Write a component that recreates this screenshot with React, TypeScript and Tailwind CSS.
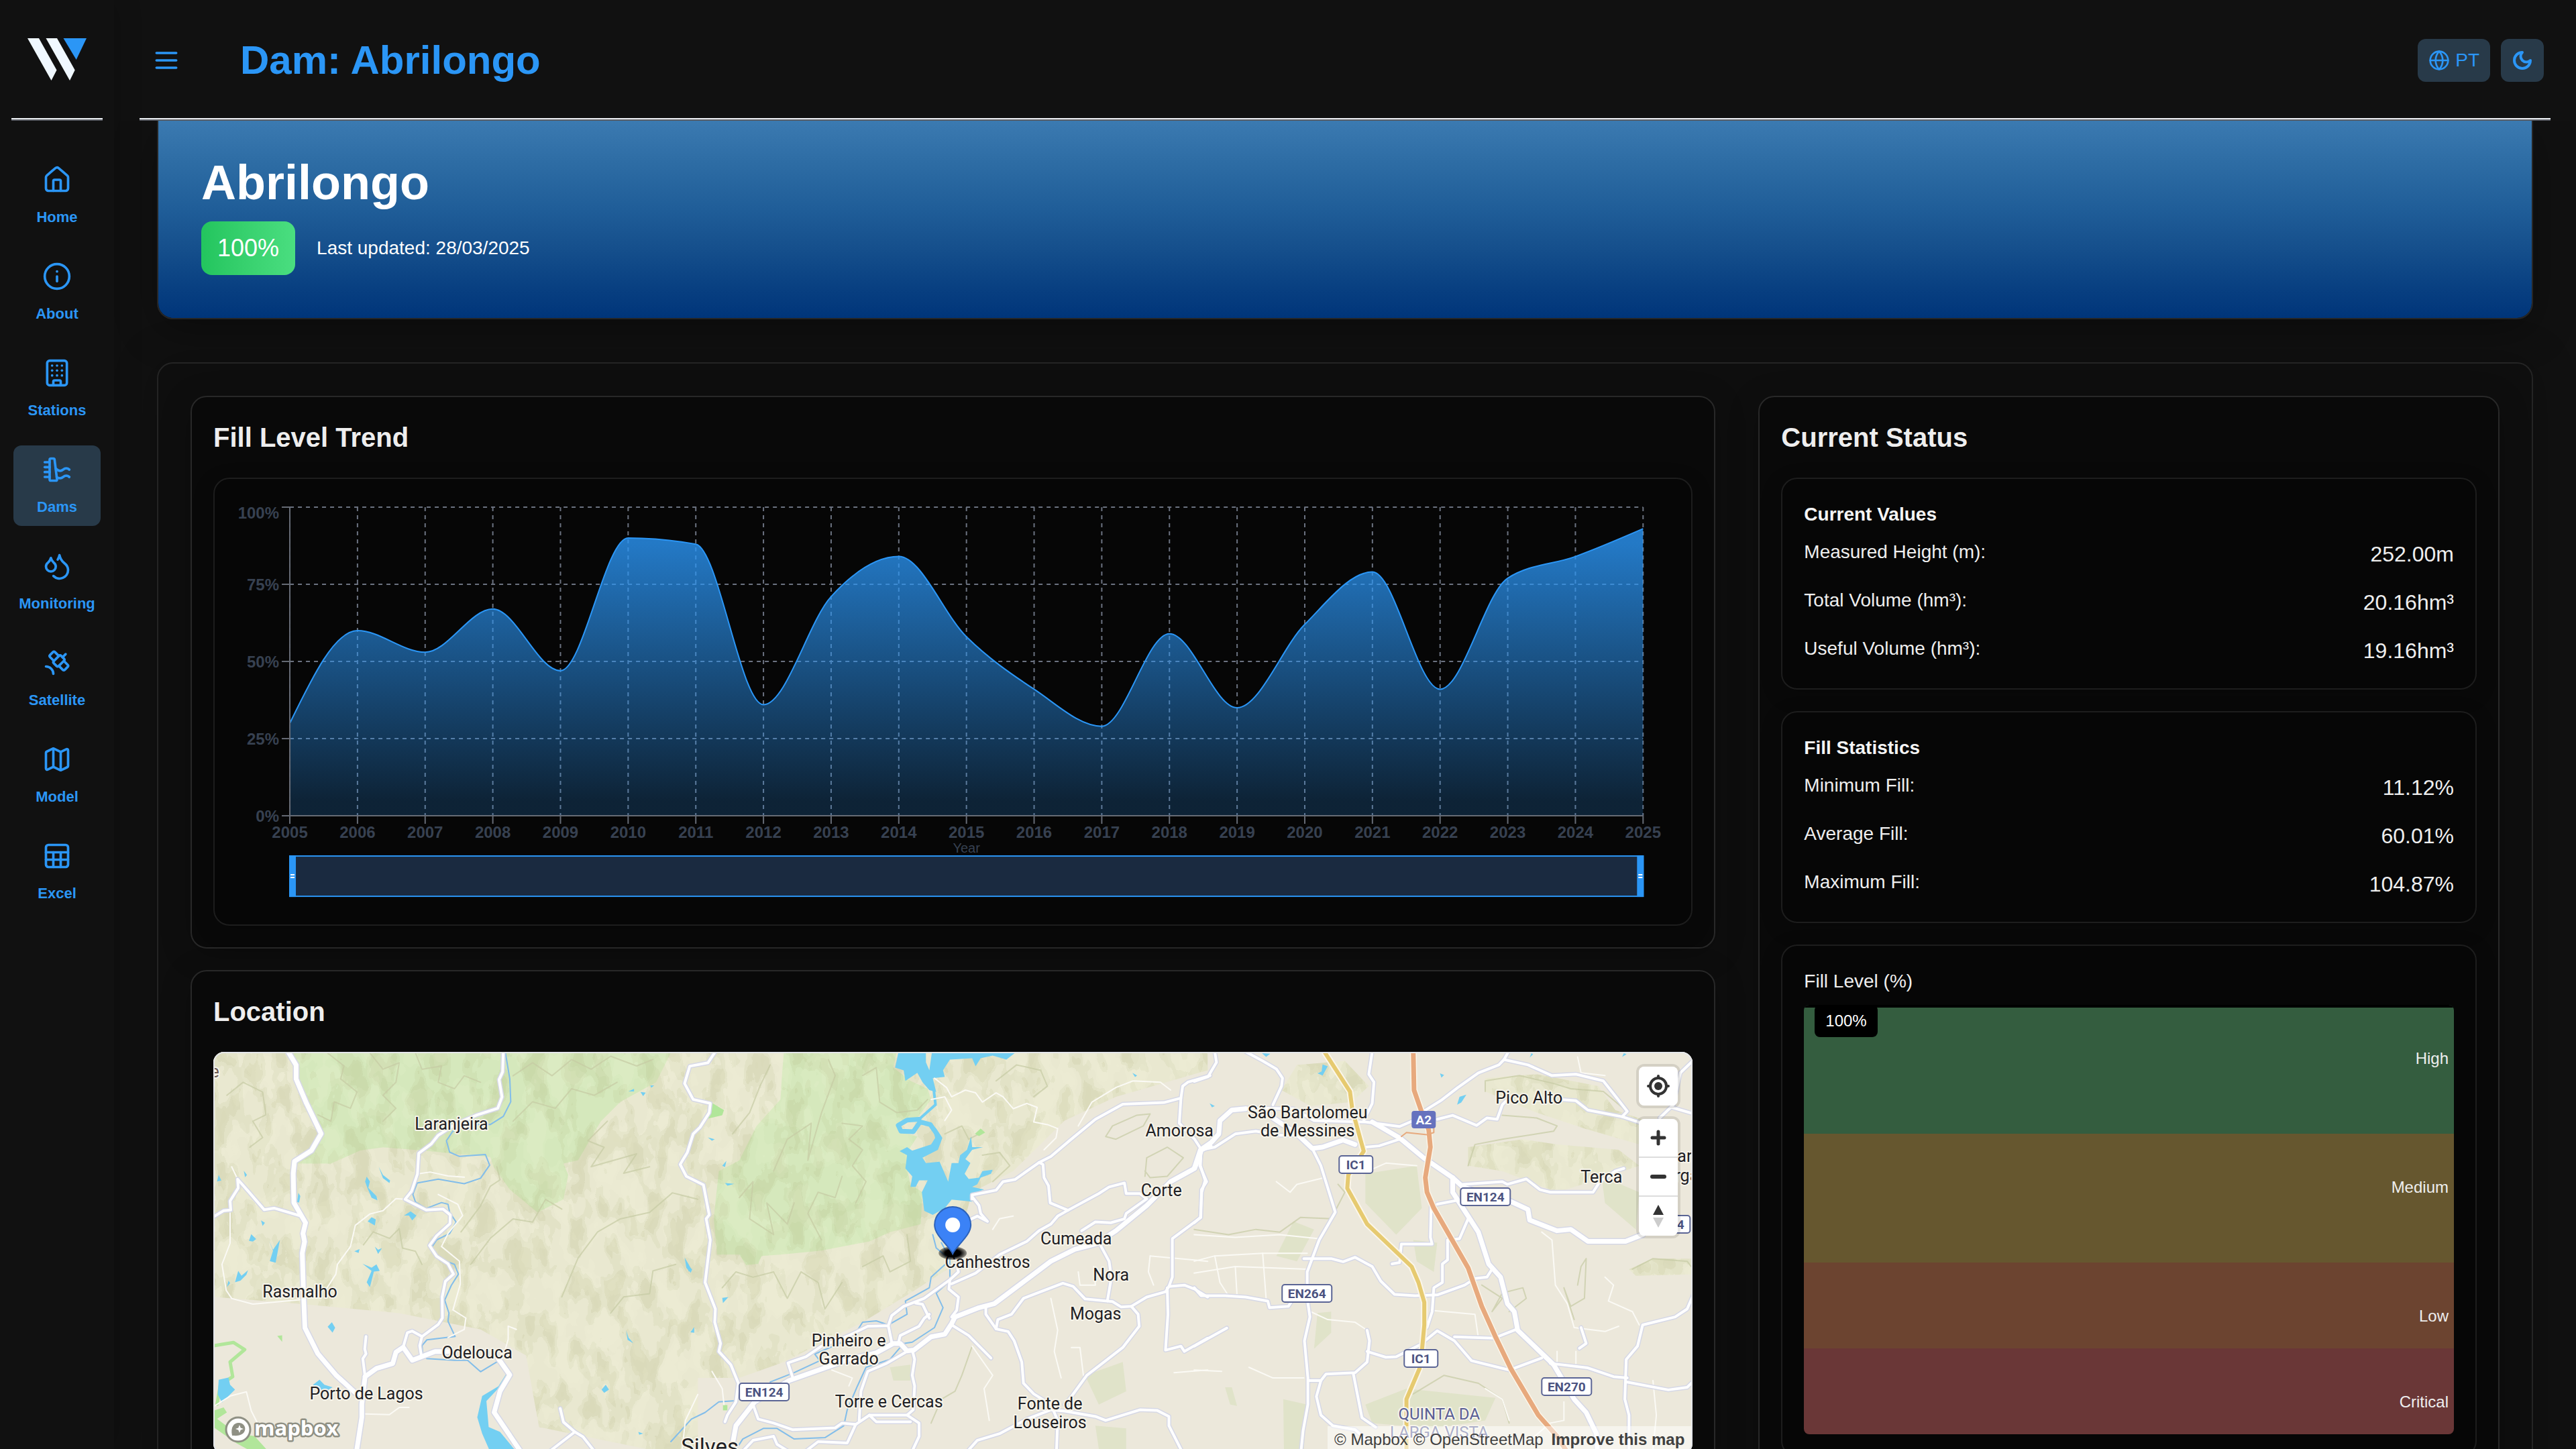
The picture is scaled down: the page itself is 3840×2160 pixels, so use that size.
import type { ReactNode } from "react";
import {
  Building,
  Dam,
  Droplets,
  Globe,
  House,
  Info,
  Map as MapIcon,
  Satellite,
  Sheet,
  type LucideIcon,
} from "lucide-react";

const NAV: { label: string; icon: LucideIcon; active?: boolean }[] = [
  { label: "Home", icon: House },
  { label: "About", icon: Info },
  { label: "Stations", icon: Building },
  { label: "Dams", icon: Dam, active: true },
  { label: "Monitoring", icon: Droplets },
  { label: "Satellite", icon: Satellite },
  { label: "Model", icon: MapIcon },
  { label: "Excel", icon: Sheet },
];

function Rule() {
  return <hr className="h-0 border-t-2 border-b-2 border-t-[#eef1f5] border-b-[#5a5d64]" />;
}

function Logo() {
  return (
    <svg viewBox="0 0 88 63" className="h-[63px] w-[88px]" role="img" aria-label="W">
      <path fill="#f0f8ff" d="M0 0H17L43.5 47.5 35.5 63Z" />
      <path fill="#f0f8ff" d="M27.5 0H44L70.7 47.5 63 63Z" />
      <path fill="#2b96f6" d="M53.5 0H88L72.7 32Z" />
    </svg>
  );
}

function Sidebar() {
  return (
    <aside className="z-10 flex w-[170px] shrink-0 flex-col bg-[#111111] shadow-[0_0_40px_rgba(0,0,0,0.2)]">
      <a href="#home" className="flex h-[176px] items-center justify-center">
        <Logo />
      </a>
      <div className="px-[17px]">
        <Rule />
      </div>
      <nav className="mt-[52px] flex flex-col gap-6 px-5">
        {NAV.map(({ label, icon: Icon, active }) => (
          <a
            key={label}
            href={"#" + label.toLowerCase()}
            className={
              "flex flex-col items-center gap-[18px] rounded-xl pt-3.5 pb-3 text-[22px] leading-8 font-bold text-[#2b96f6] " +
              (active ? "bg-[#283a49]" : "")
            }
          >
            <Icon size={44} strokeWidth={2} />
            {label}
          </a>
        ))}
      </nav>
    </aside>
  );
}

function Header() {
  return (
    <header>
      <div className="flex h-[176px] items-center pt-1 pr-2.5 pl-[18px]">
        <button type="button" aria-label="Toggle menu" className="text-[#2b96f6]">
          <svg viewBox="0 0 24 24" className="size-11" fill="none" stroke="currentColor" strokeWidth={2} strokeLinecap="round">
            <path d="M4 6h16M4 12h16M4 18h16" />
          </svg>
        </button>
        <h1 className="ml-22 flex-1 text-[60px] leading-[72px] font-bold text-[#2b96f6]">Dam: Abrilongo</h1>
        <div className="flex gap-4 text-[#2b96f6]">
          <button type="button" className="flex h-16 items-center gap-2 rounded-xl bg-[#283a49] px-4 text-[28px] leading-8">
            <Globe size={32} strokeWidth={2} />
            PT
          </button>
          <button type="button" aria-label="Toggle theme" className="flex size-16 items-center justify-center rounded-xl bg-[#283a49]">
            <svg viewBox="0 0 24 24" className="size-8" fill="none" stroke="currentColor" strokeWidth={3} strokeLinejoin="round">
              <path d="M12 3a6 6 0 0 0 9 9 9 9 0 1 1-9-9Z" />
            </svg>
          </button>
        </div>
      </div>
      <Rule />
    </header>
  );
}

function Hero() {
  return (
    <section className="rounded-b-3xl border-2 border-t-0 border-[#262626] bg-[linear-gradient(to_bottom,#3b7ab1_0%,#2d6ca4_22%,#205e99_44%,#154f8c_65%,#073e80_87%,#00357a_100%)] bg-clip-padding px-16 pt-12 pb-16 text-white shadow-[0_16px_64px_rgba(0,0,0,0.3)]">
      <h2 className="text-[72px] leading-[88px] font-bold">Abrilongo</h2>
      <div className="mt-3.5 flex items-center gap-8">
        <span className="rounded-2xl bg-linear-to-r from-[#22c55e] to-[#4ade80] px-6 py-4 text-4xl leading-[48px]">100%</span>
        <span className="text-[28px] leading-10">Last updated: 28/03/2025</span>
      </div>
    </section>
  );
}

/* ---------- Fill level chart ---------- */

const LEVELS = [30, 60, 53, 67, 47, 90, 88, 36, 71, 84, 58, 41, 29, 59, 35, 62, 79, 41, 77, 84, 93];
const FIRST_YEAR = 2005;
const PLOT = { left: 80, right: 2097, top: 10, bottom: 470 };
const px = (i: number) => PLOT.left + (i * (PLOT.right - PLOT.left)) / (LEVELS.length - 1);
const py = (v: number) => PLOT.bottom - (v * (PLOT.bottom - PLOT.top)) / 100;

/* Monotone cubic interpolation (Fritsch–Carlson tangents). */
function monotonePath(xs: number[], ys: number[]) {
  const n = xs.length;
  const slope = (i: number) => (ys[i + 1] - ys[i]) / (xs[i + 1] - xs[i]);
  const tangent: number[] = [];
  for (let i = 1; i < n - 1; i++) {
    const h0 = xs[i] - xs[i - 1];
    const h1 = xs[i + 1] - xs[i];
    const s0 = slope(i - 1);
    const s1 = slope(i);
    const p = (s0 * h1 + s1 * h0) / (h0 + h1);
    tangent[i] = (Math.sign(s0) + Math.sign(s1)) * Math.min(Math.abs(s0), Math.abs(s1), 0.5 * Math.abs(p));
  }
  tangent[0] = (3 * slope(0) - tangent[1]) / 2;
  tangent[n - 1] = (3 * slope(n - 2) - tangent[n - 2]) / 2;
  let d = `M${xs[0]},${ys[0]}`;
  for (let i = 0; i < n - 1; i++) {
    const h = (xs[i + 1] - xs[i]) / 3;
    d += `C${xs[i] + h},${ys[i] + h * tangent[i]} ${xs[i + 1] - h},${ys[i + 1] - h * tangent[i + 1]} ${xs[i + 1]},${ys[i + 1]}`;
  }
  return d;
}

function FillChart() {
  const line = monotonePath(
    LEVELS.map((_, i) => px(i)),
    LEVELS.map(py),
  );
  const width = PLOT.right - PLOT.left;
  return (
    <svg viewBox="0 0 2137 600" className="block w-full" role="img" aria-label="Fill level by year">
      <defs>
        <linearGradient id="fill" x1="0" y1="0" x2="0" y2="1">
          <stop offset="5%" stopColor="#2b96f6" stopOpacity={0.8} />
          <stop offset="95%" stopColor="#2b96f6" stopOpacity={0.2} />
        </linearGradient>
      </defs>
      <g stroke="#6b7280" strokeWidth={2} strokeDasharray="6 6">
        {[0, 25, 50, 75, 100].map((v) => (
          <path key={v} d={`M${PLOT.left} ${py(v)}H${PLOT.right}`} />
        ))}
        {LEVELS.map((_, i) => (
          <path key={i} d={`M${px(i)} ${PLOT.top}V${PLOT.bottom}`} />
        ))}
      </g>
      <path d={`${line}V${PLOT.bottom}H${PLOT.left}Z`} fill="url(#fill)" />
      <path d={line} fill="none" stroke="#2b96f6" strokeWidth={2} />
      <g stroke="#666b75" strokeWidth={2}>
        <path d={`M${PLOT.left} ${PLOT.top}V${PLOT.bottom}H${PLOT.right}`} fill="none" />
        {LEVELS.map((_, i) => (
          <path key={i} d={`M${px(i)} ${PLOT.bottom}v12`} />
        ))}
        {[0, 25, 50, 75, 100].map((v) => (
          <path key={v} d={`M${PLOT.left} ${py(v)}h-12`} />
        ))}
      </g>
      <g fill="#374151" fontSize={24} fontWeight={700}>
        {[0, 25, 50, 75, 100].map((v) => (
          <text key={v} x={64} y={v === 100 ? 27 : py(v) + 9} textAnchor="end">
            {v}%
          </text>
        ))}
        {LEVELS.map((_, i) => (
          <text key={i} x={px(i)} y={503} textAnchor="middle">
            {FIRST_YEAR + i}
          </text>
        ))}
      </g>
      <text x={px(10)} y={525} fill="#374151" fontSize={20} textAnchor="middle">
        Year
      </text>
      <rect x={PLOT.left} y={530} width={width} height={60} fill="#1a2a40" stroke="#2b96f6" strokeWidth={2} />
      {[PLOT.left - 1, PLOT.right - 9].map((x) => (
        <g key={x}>
          <rect x={x} y={529} width={10} height={62} fill="#2b96f6" />
          <path d={`M${x + 2} 558h6M${x + 2} 562h6`} stroke="#fff" strokeWidth={2} />
        </g>
      ))}
    </svg>
  );
}

/* ---------- Location map ---------- */

/* The map is digitised in three sheets; each has its own scale and origin. */
type SheetSpec = { sx: number; sy: number; ox: number; oy: number };
const WEST: SheetSpec = { sx: 2.063, sy: 2.063, ox: -38, oy: -168 };
const CENTRE: SheetSpec = { sx: 1.96, sy: 2.529, ox: 682, oy: -28 };
const EAST: SheetSpec = { sx: 1.96, sy: 2.529, ox: 1462, oy: -28 };

function project(s: SheetSpec, points: string) {
  return points
    .split(" ")
    .map((p) => {
      const [x, y] = p.split(",").map(Number);
      return `${(x / s.sx + s.ox).toFixed(1)},${(y / s.sy + s.oy).toFixed(1)}`;
    })
    .join(" ");
}

const MAJOR: [SheetSpec, string][] = [
  [WEST, "305,340 333,387 333,430 365,505 410,598 380,650 328,683 324,720 326,810 352,855 362,872 354,905 359,930 352,965 356,1100 360,1195 400,1275 455,1340 515,1395 540,1400"],
  [WEST, "545,1345 535,1430 535,1470 515,1600"],
  [WEST, "545,1345 580,1320 630,1305 640,1270 662,1255 690,1295 760,1268 800,1268"],
  [WEST, "955,1290 990,1340 960,1390 942,1455 1040,1600"],
  [CENTRE, "170,1620 190,1480 245,1390 345,1310 520,1230 600,1205 650,1170 670,1170 690,1198 710,1195 760,1145 800,1135 820,1095 830,1070 900,1035 945,1020 1110,860 1180,815 1240,795 1300,745 1390,650 1460,560 1530,510 1550,440 1575,425"],
  [EAST, "755,545 755,600 800,690 830,750 860,870 895,920 915,1020 935,1050 945,1120 1050,1250 1110,1380 1145,1430 1175,1510 1180,1620"],
  [EAST, "520,335 600,395 670,470 755,545 785,580 850,610"],
  [EAST, "925,635 975,665 980,705 1060,745 1100,740 1150,785 1260,785 1310,760"],
  [EAST, "0,510 18,440 50,412 72,380 75,330 110,290 150,285"],
  [EAST, "230,320 300,380 345,435 375,430 435,403 470,420"],
];

const ROADS: [SheetSpec, string][] = [
  [WEST, "75,856 110,835 132,833 130,805 155,765 153,738 190,780 235,832 265,827 350,852"],
  [WEST, "970,340 968,408 957,432 966,485 953,520 890,540 830,565 770,603 748,630 710,658 706,722 688,775 668,800 733,833 785,830 807,848 806,875 765,912 743,942 765,975 800,998 817,1030 792,1052 782,1100 783,1165 770,1185 720,1222 690,1205 675,1210 662,1255"],
  [WEST, "720,1222 713,1250 718,1280"],
  [WEST, "548,1222 544,1260 548,1275 538,1290 545,1345"],
  [WEST, "1080,1600 1190,1515 1155,1485 1145,1443"],
  [WEST, "1190,1515 1215,1530 1270,1600"],
  [CENTRE, "130,70 108,112 55,125 40,190 65,250 115,265 112,300 85,355 65,380 48,450 27,495 45,540 95,572 112,685 103,700 115,780 100,940 130,1040 128,1090 145,1170 140,1200 175,1250 197,1320 190,1390 165,1440 158,1465"],
  [CENTRE, "355,1295 342,1243 395,1220 440,1180 520,1140 575,1105 635,1103 645,1065 680,1030 740,1000 815,930 840,900 835,870"],
  [CENTRE, "635,1103 645,1165"],
  [CENTRE, "715,1018 735,1022 755,1075"],
  [CENTRE, "815,930 812,965 840,995 835,1045 820,1070"],
  [CENTRE, "820,945 890,905 960,835 1040,785 1075,745 1110,720 1130,690 1160,668 1250,605 1280,580 1325,565 1330,605 1370,605 1390,625 1330,680 1325,700 1285,715 1240,712 1200,745"],
  [CENTRE, "1160,668 1108,640 1103,575 1090,545 1087,495 1075,488"],
  [CENTRE, "880,625 880,610 950,592 970,560 1005,552 1075,488 1110,465 1165,405 1240,325 1320,268 1440,262 1490,245 1495,200 1510,185 1575,160"],
  [CENTRE, "1490,245 1485,340 1530,400 1550,440"],
  [CENTRE, "882,620 900,650 905,680 925,710 895,690 870,705"],
  [CENTRE, "705,1195 712,1230 705,1290 712,1330 708,1420 690,1440"],
  [CENTRE, "690,1200 630,1245 575,1275 555,1350 550,1460"],
  [CENTRE, "665,1165 670,1140 725,1105 740,1075 755,1060"],
  [CENTRE, "920,1035 920,1060 950,1115 985,1125 1003,1160 1025,1240 1030,1320 1060,1360 1110,1400 1130,1460 1125,1620"],
  [CENTRE, "950,1115 955,1080 995,1060 1030,1000 1145,943 1175,955 1210,1002 1290,1012 1315,1032 1345,1030 1390,995 1445,975 1455,955 1500,950 1530,965 1568,995"],
  [CENTRE, "1255,800 1280,860 1287,920 1275,1010"],
  [CENTRE, "1345,1030 1365,1060 1368,1105 1320,1185 1215,1290 1170,1370 1150,1400"],
  [CENTRE, "820,1100 870,1140 935,1225"],
  [CENTRE, "1455,955 1465,920 1465,775 1548,695 1550,590 1565,560 1545,500 1550,440"],
  [CENTRE, "1450,960 1452,1060 1445,1195 1490,1180 1500,1200 1568,1150"],
  [CENTRE, "850,1600 895,1535 960,1510 1040,1455 1110,1420 1150,1425 1240,1445 1270,1460 1370,1420 1420,1422 1455,1445 1455,1480 1510,1620"],
  [CENTRE, "240,1400 255,1455 300,1470 355,1495 480,1488 500,1470 540,1475 580,1440 690,1440 725,1470 725,1520 700,1590"],
  [CENTRE, "540,1475 515,1545 430,1540 380,1590"],
  [CENTRE, "200,1590 240,1535 300,1520 310,1550 360,1590"],
  [CENTRE, "580,1440 600,1465 700,1465"],
  [EAST, "150,70 200,105 240,135 258,170 255,200 230,270"],
  [EAST, "60,70 65,110 40,165 0,182"],
  [EAST, "520,70 510,155 525,185 520,265 495,330"],
  [EAST, "150,282 290,285 350,330 500,335 600,352 640,330"],
  [EAST, "20,440 60,430 120,380 180,370 250,385 310,385"],
  [EAST, "500,430 540,425 600,400"],
  [EAST, "345,435 370,500 412,675 365,780 330,900 330,1000 338,1070 322,1160 332,1300 332,1400 318,1500 310,1600"],
  [EAST, "785,570 900,560 915,570 970,550 1010,590 1040,600 1165,600 1185,560 1230,520 1255,510"],
  [EAST, "905,100 890,120 830,150 770,205 720,255 670,295"],
  [EAST, "918,70 905,100 975,120 1045,160 1115,155 1195,180 1235,245 1265,295 1250,315"],
  [EAST, "1070,250 1115,255 1150,290 1250,315 1320,345"],
  [EAST, "710,325 755,310 825,348 855,320 885,325 900,270 915,250"],
  [EAST, "320,850 400,850 435,862 470,845 520,880 545,935 585,985 645,990 710,987 790,950 820,925 855,920 870,890"],
  [EAST, "692,650 690,770 695,795 605,795 600,865 578,870"],
  [EAST, "770,630 710,645"],
  [EAST, "800,700 775,775 740,780 740,855 725,870 725,940 700,960 695,1050 680,1110"],
  [EAST, "0,960 20,990 90,990 150,995 215,1010 220,1035 275,1030 290,1000"],
  [EAST, "0,1180 95,1112"],
  [EAST, "335,1310 370,1310 385,1285 470,1280 505,1240 512,1160 505,1120"],
  [EAST, "505,1200 560,1222 590,1220 660,1175 710,1122 760,1160 810,1235 920,1270 1015,1225"],
  [EAST, "760,1145 875,1150 945,1115"],
  [EAST, "465,1285 490,1450 530,1485"],
  [EAST, "370,1310 357,1370 370,1440 405,1480 470,1495 500,1530"],
  [EAST, "1040,1245 1150,1262 1225,1295 1265,1300"],
  [EAST, "1460,980 1440,1040 1405,1070 1310,1100 1295,1180 1262,1230 1258,1380 1270,1440 1270,1600"],
  [EAST, "1262,1315 1385,1345 1440,1335 1460,1310"],
  [EAST, "1130,1110 1145,1170 1125,1188"],
  [EAST, "0,715 18,695 22,600 32,555 18,500 20,440"],
  [EAST, "1460,100 1420,150 1400,270 1360,320"],
  [EAST, "1395,280 1460,305"],
];

const LANES: [SheetSpec, string][] = [
  [WEST, "130,835 130,935 105,1000 118,1080 135,1105 200,1122 350,1108"],
  [WEST, "420,1085 455,1030 460,1000 500,945 515,880 560,845 600,835 640,798 668,800"],
  [WEST, "706,722 745,716 800,728 850,732"],
  [WEST, "770,785 830,815 845,850 800,905 780,945 835,990 838,1060 815,1140 855,1165 850,1200 800,1225"],
  [WEST, "83,1435 130,1405 180,1392 195,1450 215,1490"],
  [WEST, "135,700 153,738"],
  [WEST, "1010,1200 985,1190 985,1230 968,1290"],
  [WEST, "545,1460 620,1462 650,1440 680,1440"],
  [WEST, "1520,1568 1530,1480 1568,1400"],
  [CENTRE, "770,170 805,205 820,240 860,215 890,225 910,260 950,225 970,240 1000,285 1040,265 1070,280 1060,335 1100,345 1130,360 1125,395 1090,440"],
  [CENTRE, "1190,350 1230,260 1300,205 1350,180 1430,185 1460,215"],
  [CENTRE, "760,250 800,240 820,290 800,330"],
  [CENTRE, "1400,840 1568,860"],
  [CENTRE, "1400,840 1395,900 1410,950"],
  [CENTRE, "1110,1000 1130,1120 1120,1200 1140,1300"],
  [CENTRE, "1170,1185 1195,1185 1205,1290"],
  [CENTRE, "1470,1280 1568,1270"],
  [CENTRE, "880,1180 940,1290 915,1340 930,1460"],
  [CENTRE, "940,740 960,700 1000,690"],
  [CENTRE, "1190,900 1195,950 1240,950 1235,880"],
  [CENTRE, "470,1270 530,1300 520,1330"],
  [CENTRE, "120,1275 150,1340 155,1400"],
  [EAST, "0,860 60,840 200,830 330,830"],
  [EAST, "0,905 120,880 330,890"],
  [EAST, "60,840 75,940 100,990"],
  [EAST, "120,880 125,990"],
  [EAST, "200,830 210,1000"],
  [EAST, "0,760 120,770 250,760 365,775"],
  [EAST, "240,560 280,600 300,570 380,545"],
  [EAST, "340,1050 390,1080 470,1090 505,1120"],
  [EAST, "690,1045 820,1060 830,1150"],
  [EAST, "1015,750 1045,780 1055,950 1090,1020 1110,1110"],
  [EAST, "1200,920 1225,950 1210,1010 1280,1050 1300,1100"],
  [EAST, "1110,1110 1200,1125 1240,1105"],
  [EAST, "1060,1200 1060,1240"],
  [EAST, "1115,1200 1115,1255"],
  [EAST, "1340,1310 1350,1440 1340,1568"],
  [EAST, "985,1530 1040,1470 1080,1460 1080,1390"],
  [EAST, "0,1270 80,1275"],
  [EAST, "160,1260 230,1300 320,1300"],
  [EAST, "450,500 490,530 560,490 650,500"],
  [EAST, "1120,90 1130,150 1200,160"],
  [EAST, "850,1340 900,1380 920,1460"],
];

const STREAMS: [SheetSpec, string][] = [
  [WEST, "975,340 990,430 993,500 970,545 930,570 870,570 815,590 795,620 805,655 835,668 915,662 928,695 900,735 850,752 770,738 705,750 692,785 700,808 733,828 780,810 800,815 805,840 825,870 805,905 765,925 748,950 780,985 820,1000 832,1030 810,1065 790,1110 803,1150 800,1175 822,1222 735,1232 720,1250 722,1270 735,1290 820,1295 860,1295 900,1330 955,1297"],
  [CENTRE, "765,760 775,810 803,840 803,870 760,920 755,960 720,985 685,1010 690,1060 635,1100 600,1085 560,1090 545,1120 510,1160 420,1210 435,1235 360,1280 290,1315"],
  [CENTRE, "790,790 815,850 815,935 775,980 795,1035 770,1110 705,1165 680,1170 640,1230 570,1260 545,1330 515,1420 505,1480 450,1525 360,1530 310,1490 270,1490 210,1530 195,1560"],
  [CENTRE, "195,1385 140,1390 100,1430 60,1455 0,1540"],
];

const PONDS: [SheetSpec, string][] = [
  [WEST, "550,730 560,745 555,765 580,790 583,803 565,795 552,765 545,745"],
  [WEST, "587,700 600,725 622,742 620,750 600,735"],
  [WEST, "565,855 578,862 575,880 553,868"],
  [WEST, "665,850 685,837 703,850 690,865 680,850"],
  [WEST, "225,865 237,872 230,882"],
  [WEST, "195,907 210,922 200,930 188,928"],
  [WEST, "250,928 262,955 283,925 270,995 252,990 262,958"],
  [WEST, "145,1055 155,1020 165,1035 185,1018 180,1032 162,1050"],
  [WEST, "120,1070 130,1058 125,1050"],
  [WEST, "537,998 565,1010 580,1000 590,1020 572,1022 560,1070 550,1055 565,1020"],
  [WEST, "512,960 528,953 525,965"],
  [WEST, "575,945 585,955 597,950 585,968"],
  [WEST, "340,780 346,790 342,810 336,808"],
  [WEST, "443,1178 453,1195 445,1210 430,1192"],
  [WEST, "1355,468 1372,460 1372,468"],
  [WEST, "1392,470 1408,472 1400,483"],
  [WEST, "1422,450 1434,450 1425,457"],
  [WEST, "1348,1203 1355,1225 1370,1243 1352,1232"],
  [WEST, "1272,1385 1285,1370 1295,1385 1280,1395"],
  [WEST, "1528,980 1540,1000 1550,1018 1540,1022"],
  [WEST, "1385,1515 1400,1520 1388,1524"],
  [WEST, "95,725 103,742 90,745"],
  [WEST, "172,712 182,725 176,732"],
  [WEST, "385,1370 405,1355 420,1370 445,1378 425,1390 400,1382"],
  [WEST, "95,1355 125,1348 130,1370 145,1385 120,1410 105,1425 92,1400"],
  [WEST, "980,1335 955,1375 905,1405 890,1470 905,1520 940,1600 1030,1600 960,1515 925,1500 918,1420 975,1360"],
  [CENTRE, "40,845 50,880 62,890 58,903 45,885"],
  [CENTRE, "108,393 128,400 120,406"],
  [CENTRE, "150,500 162,482 158,505"],
  [CENTRE, "158,565 185,568 165,575"],
  [CENTRE, "150,998 168,995 152,1018"],
  [CENTRE, "57,1128 68,1108 68,1130"],
  [CENTRE, "1348,150 1362,160 1356,166"],
  [EAST, "198,76 222,78 210,90"],
  [EAST, "375,118 390,125 375,160 360,152 372,145"],
  [EAST, "45,265 60,275 52,280"],
  [EAST, "718,152 730,158 722,168"],
  [EAST, "795,232 780,262 768,270 775,240"],
  [EAST, "980,92 985,76 990,80"],
  [EAST, "1250,90 1255,76 1263,80"],
  [CENTRE, "665,70 655,130 680,140 685,180 720,150 735,185 755,215 775,222 765,170 800,165 795,140 815,100 880,95 890,125 905,95 940,85 980,100 1010,70 770,70 762,76 755,140 745,110 745,70"],
  [CENTRE, "760,340 775,360 793,395 780,440 735,470 745,490 785,485 810,560 820,490 840,490 845,460 865,440 877,390 880,430 912,430 880,440 860,475 875,490 858,530 870,550 900,545 910,520 940,515 935,530 905,545 895,570 880,580 915,590 880,605 880,635 820,628 800,660 765,685 740,670 733,600 750,555 725,555 715,580 700,580 705,540 685,510 690,460 668,445 690,430 705,443 760,420 772,395"],
];

const FORESTS: [SheetSpec, string][] = [
  [WEST, "320,340 1490,340 1440,440 1330,500 1270,560 1200,680 1155,690 1170,725 1155,800 1075,840 990,770 940,700 930,670 720,650 600,640 530,650 440,690 330,690 410,600 340,460"],
  [CENTRE, "330,70 660,70 650,130 700,180 750,210 760,250 720,320 670,330 665,370 720,390 700,430 690,450 690,510 700,570 735,600 730,720 640,750 580,785 440,820 320,835 265,840 255,870 220,875 200,835 135,835 125,700 140,520 200,480 250,350 320,250 325,150"],
];

const HILLS: [SheetSpec, string][] = [
  [WEST, "78,340 1568,340 1568,1600 1080,1500 1040,1280 900,1200 650,1150 330,1120 78,1100"],
  [CENTRE, "0,70 1240,70 1150,330 1000,520 880,600 820,880 700,980 560,1090 330,1240 200,1300 0,1300"],
  [CENTRE, "1240,70 1568,70 1568,140 1300,240 1150,330"],
  [EAST, "300,120 440,105 510,200 460,260 340,275 255,215"],
  [EAST, "850,170 1000,155 1180,200 1230,290 1320,330 1300,420 1140,360 1000,300 850,220"],
  [EAST, "800,430 960,400 1060,420 1240,440 1300,500 1160,560 1060,600 900,520 800,500"],
  [EAST, "1270,890 1340,850 1455,850 1455,910 1290,915"],
];

const FIELDS: [SheetSpec, string][] = [
  [EAST, "500,1400 620,1340 880,1375 850,1460 700,1490 520,1470"],
  [EAST, "500,530 650,500 665,660 590,760 500,640"],
  [EAST, "260,1380 330,1400 320,1568 262,1568"],
  [EAST, "290,710 350,740 300,860 240,840"],
  [EAST, "640,780 710,790 700,900 650,860"],
  [EAST, "360,1055 400,1050 400,1130 350,1190"],
  [EAST, "90,1335 110,1335 125,1405 105,1400"],
  [EAST, "1190,540 1300,600 1290,740 1200,640"],
  [CENTRE, "1210,1290 1320,1240 1330,1350 1250,1400"],
  [CENTRE, "1240,1480 1330,1490 1330,1568 1250,1568"],
  [CENTRE, "640,1260 700,1250 700,1310 650,1310"],
];

const PARKS: [SheetSpec, string][] = [
  [CENTRE, "118,262 155,290 150,310 100,325"],
  [CENTRE, "905,360 918,375 900,388 888,380"],
  [CENTRE, "152,1402 165,1402 165,1422 152,1422"],
  [WEST, "275,1220 290,1218 290,1238"],
  [WEST, "78,1450 110,1440 120,1455 90,1475 150,1520 205,1528 270,1600 240,1600 150,1550 78,1500"],
];

const CONTOURS: [SheetSpec, string][] = [
  [WEST, "430,350 480,390 470,430 520,470 500,520 450,500 440,560 400,540"],
  [WEST, "560,350 600,400 650,380 640,440 600,480 640,520 600,560"],
  [WEST, "700,350 720,400 780,390 770,440 820,460 850,420 900,440"],
  [WEST, "1000,420 1060,380 1120,420 1180,370 1240,400 1300,360 1380,390 1430,370"],
  [WEST, "1000,560 1060,500 1130,520 1180,460 1250,480 1320,440"],
  [WEST, "1290,560 1230,620 1280,640 1240,700 1380,660 1340,720 1420,700"],
  [WEST, "840,900 900,820 930,760 960,740 950,700"],
  [WEST, "870,1000 930,920 1000,860 1060,870 1100,800 1150,830"],
  [WEST, "1150,1100 1200,980 1260,900 1330,860 1420,840 1490,780 1568,800"],
  [WEST, "1300,1150 1340,1100 1420,1090 1430,1020 1500,1000"],
  [WEST, "540,940 570,900 620,920 650,890 660,950 700,960 720,1000"],
  [WEST, "120,480 170,440 230,470 240,540 200,560 230,610 190,640"],
  [CENTRE, "180,380 230,300 260,200 290,120"],
  [CENTRE, "300,520 340,400 410,340 400,480 440,300 480,160 460,100"],
  [CENTRE, "500,340 560,350 520,400 560,440 530,500 570,560 540,640"],
  [CENTRE, "560,160 600,130 610,260 660,300 720,290 750,250"],
  [CENTRE, "200,620 240,560 230,700 300,760 280,640 340,720 360,640"],
  [CENTRE, "440,780 400,680 430,600 480,620 500,540"],
  [CENTRE, "150,960 190,900 240,920 300,900 340,1000 380,900 430,940 450,1040 500,940"],
  [CENTRE, "560,880 620,840 640,900 700,860 690,760"],
  [CENTRE, "950,180 1010,120 1080,140 1100,200 1060,240"],
  [CENTRE, "800,380 850,350 870,400 900,380"],
  [CENTRE, "910,460 960,450 990,500 940,560"],
  [CENTRE, "1385,540 1390,470 1450,430 1497,470 1450,540 1400,545 1385,520"],
  [CENTRE, "1270,390 1290,350 1360,310 1400,305 1380,350 1300,400 1270,390"],
  [CENTRE, "880,1180 850,1290 830,1350 790,1380 760,1470"],
  [EAST, "850,220 850,180 950,160 1050,190 1100,210 1195,220 1250,280"],
  [EAST, "800,500 820,420 900,400 1050,370 1060,350 1000,320 900,310"],
  [EAST, "0,740 100,760 180,740 250,750 310,695 400,700 440,600 420,570"],
  [EAST, "840,950 900,1000 870,1050 900,980 960,960 970,1000 920,1050"],
  [EAST, "1120,950 1130,880 1145,850 1140,1000 1100,1030 1080,960 1110,1080"],
  [EAST, "1280,890 1340,850 1440,860 1452,880"],
  [EAST, "640,1360 730,1290 830,1320 900,1380 920,1470"],
];

const PLACES: [string, number, number][] = [
  ["Laranjeira", 355, 116],
  ["Rasmalho", 129, 366],
  ["Odelouca", 393, 457],
  ["Porto de Lagos", 228, 518],
  ["Canhestros", 1154, 322],
  ["Cumeada", 1286, 287],
  ["Nora", 1338, 341],
  ["Mogas", 1315, 399],
  ["Corte", 1413, 215],
  ["Amorosa", 1440, 126],
  ["Pinheiro e", 947, 439],
  ["Garrado", 947, 466],
  ["Torre e Cercas", 1007, 530],
  ["Fonte de", 1247, 533],
  ["Louseiros", 1247, 561],
  ["São Bartolomeu", 1631, 99],
  ["de Messines", 1631, 126],
  ["Pico Alto", 1961, 77],
  ["Terca", 2069, 195],
  ["ar", 2193, 164],
  ["rga", 2196, 193],
];

const SHIELDS: [string, number, number, number][] = [
  ["EN124", 821, 507, 74],
  ["IC1", 1703, 168, 50],
  ["EN124", 1896, 216, 74],
  ["EN264", 1630, 360, 74],
  ["IC1", 1800, 457, 50],
  ["EN270", 2017, 499, 74],
  ["EN124", 2164, 257, 74],
];

const HIGHWAY = "640,70 642,215 665,300 685,365 690,430 675,545 680,600 700,660 800,885 840,1030 880,1145 925,1265 1005,1440 1060,1520 1110,1620";
const TRUNK = "380,70 455,220 462,290 495,445 450,535 447,585 505,720 635,880 655,940 672,1015 672,1100 665,1200 658,1265 620,1380 620,1620";

function Lines({ data, stroke, width }: { data: [SheetSpec, string][]; stroke: string; width: number }) {
  return (
    <g fill="none" stroke={stroke} strokeWidth={width} strokeLinejoin="round" strokeLinecap="round">
      {data.map(([s, p], i) => (
        <polyline key={i} points={project(s, p)} />
      ))}
    </g>
  );
}

function Areas({ data, fill }: { data: [SheetSpec, string][]; fill: string }) {
  return (
    <g fill={fill}>
      {data.map(([s, p], i) => (
        <polygon key={i} points={project(s, p)} />
      ))}
    </g>
  );
}

function MapCanvas() {
  return (
    <svg
      viewBox="0 0 2205 600"
      preserveAspectRatio="xMinYMin slice"
      className="absolute inset-0 h-full w-full"
      role="img"
      aria-label="Map around Canhestros"
      fontFamily="Roboto, sans-serif"
    >
      <defs>
        <clipPath id="hills">
          {HILLS.map(([s, p], i) => (
            <polygon key={i} points={project(s, p)} />
          ))}
        </clipPath>
        <filter id="relief" x="0" y="0" width="100%" height="100%" colorInterpolationFilters="sRGB">
          <feTurbulence type="fractalNoise" baseFrequency="0.034 0.018" numOctaves={3} seed={7} />
          <feColorMatrix values="0 0 0 0 0.64  0 0 0 0 0.65  0 0 0 0 0.42  1 0 0 0 0" />
          <feComponentTransfer>
            <feFuncA type="discrete" tableValues="0 0 0 0 0 0.1 0.2 0.22 0.22 0.22" />
          </feComponentTransfer>
        </filter>
        <filter id="light" x="0" y="0" width="100%" height="100%" colorInterpolationFilters="sRGB">
          <feTurbulence type="fractalNoise" baseFrequency="0.028 0.018" numOctaves={3} seed={21} />
          <feColorMatrix values="0 0 0 0 1  0 0 0 0 1  0 0 0 0 0.9  0 1 0 0 0" />
          <feComponentTransfer>
            <feFuncA type="discrete" tableValues="0 0 0 0 0 0.08 0.15 0.15 0.15 0.15" />
          </feComponentTransfer>
        </filter>
        <radialGradient id="pinShadow">
          <stop offset="55%" stopColor="#000" />
          <stop offset="100%" stopColor="#000" stopOpacity={0.35} />
        </radialGradient>
      </defs>

      <rect width={2205} height={600} fill="#ece8db" />
      <Areas data={HILLS} fill="#e9e8d0" />
      <Areas data={FIELDS} fill="#e0e3c9" />
      <Areas data={FORESTS} fill="#d5e8bc" />
      <g clipPath="url(#hills)">
        <rect width={2205} height={600} filter="url(#relief)" />
        <rect width={2205} height={600} filter="url(#light)" />
      </g>
      <g opacity={0.7}>
        <Lines data={CONTOURS} stroke="#c6cba4" width={2} />
      </g>
      <Areas data={PARKS} fill="#b1e69a" />
      <Lines data={[[WEST, "80,1250 140,1240 175,1262 130,1300 138,1345 100,1370 90,1430"]]} stroke="#b1e69a" width={5} />

      <Lines data={STREAMS} stroke="#82bdea" width={2} />
      <Areas data={PONDS} fill="#73cff2" />
      <Lines data={[[CENTRE, "768,215 773,270 725,325"]]} stroke="#73cff2" width={4} />
      <Lines data={[[CENTRE, "725,325 690,328 664,348 672,370 708,372 728,335 758,345 782,390"]]} stroke="#73cff2" width={7} />

      <Lines data={LANES} stroke="#fbfaf5" width={2} />
      <Lines data={ROADS} stroke="#d6d8e6" width={7} />
      <Lines data={MAJOR} stroke="#d6d8e6" width={10} />
      <Lines data={ROADS} stroke="#ffffff" width={4} />
      <Lines data={MAJOR} stroke="#ffffff" width={7} />
      <Lines data={[[EAST, TRUNK], [EAST, HIGHWAY]]} stroke="#fbf6ea" width={10} />
      <Lines data={[[EAST, "605,390 620,375 680,383 700,375 700,360"]]} stroke="#e7a97d" width={2} />
      <Lines data={[[EAST, TRUNK]]} stroke="#e6ca70" width={6} />
      <Lines data={[[EAST, HIGHWAY]]} stroke="#e7a97d" width={7} />

      <g fill="#1f2024" fontSize={25} textAnchor="middle" stroke="#f6f4ea" strokeWidth={4} strokeLinejoin="round" paintOrder="stroke">
        {PLACES.map(([name, x, y]) => (
          <text key={name} x={x} y={y}>
            {name}
          </text>
        ))}
        <text x={740} y={600} fontSize={33}>
          Silves
        </text>
        <text x={2} y={38} fill="#6d5a50">
          e
        </text>
        <g fill="#5a5f95" fontSize={24}>
          <text x={1827} y={548}>QUINTA DA</text>
          <text x={1827} y={575}>LARGA VISTA</text>
        </g>
      </g>

      {SHIELDS.map(([name, x, y, w], i) => (
        <g key={i}>
          <rect x={x - w / 2} y={y - 13} width={w} height={26} rx={4} fill="#fff" stroke="#5b6595" strokeWidth={2} />
          <text x={x} y={y + 7} textAnchor="middle" fontSize={19} fontWeight={700} fill="#4b5280">
            {name}
          </text>
        </g>
      ))}
      <rect x={1786} y={88} width={36} height={26} rx={4} fill="#6672be" />
      <text x={1804} y={108} textAnchor="middle" fontSize={19} fontWeight={700} fill="#fff">
        A2
      </text>

      <ellipse cx={1102} cy={300} rx={21} ry={10} fill="url(#pinShadow)" />
      <path
        d="M1102 301C1096 288 1075 274 1075 258A27 27 0 0 1 1129 258C1129 274 1108 288 1102 301Z"
        fill="#3b82f6"
        stroke="#2c62ba"
        strokeWidth={2}
      />
      <circle cx={1102} cy={258} r={11} fill="#fff" />

      <circle cx={37} cy={563} r={18} fill="#fff" stroke="#8f9084" strokeWidth={3} />
      <path d="M28 572c-3-14 4-20 11-19 9 1 11 11 5 16-5 4-11 3-16 3Z" fill="#8f9084" />
      <path d="M39 556l1.700 4.300 4.300 1.700-4.300 1.700-1.700 4.300-1.700-4.300-4.300-1.700 4.300-1.700Z" fill="#fff" />
      <text
        x={61}
        y={572}
        fontFamily="'Open Sans', sans-serif"
        fontSize={31}
        fontWeight={700}
        fill="#fff"
        stroke="#8f9084"
        strokeWidth={5}
        strokeLinejoin="round"
        paintOrder="stroke"
      >
        mapbox
      </text>
    </svg>
  );
}

function MapControls() {
  const button = "flex h-[58px] w-[58px] items-center justify-center bg-white";
  return (
    <div className="absolute top-[22px] right-[22px] flex flex-col gap-5">
      <div className="overflow-hidden rounded-lg shadow-[0_0_0_4px_rgba(0,0,0,0.1)]">
        <button type="button" aria-label="Find my location" className={button}>
          <svg viewBox="0 0 36 36" className="size-9" fill="none" stroke="#333" strokeWidth={4}>
            <circle cx={18} cy={18} r={12} />
            <circle cx={18} cy={18} r={6} fill="#333" stroke="none" />
            <path d="M18 3v3M18 30v3M3 18h3M30 18h3" strokeLinecap="round" />
          </svg>
        </button>
      </div>
      <div className="flex flex-col divide-y-2 divide-[#ddd] overflow-hidden rounded-lg shadow-[0_0_0_4px_rgba(0,0,0,0.1)]">
        <button type="button" aria-label="Zoom in" className={button}>
          <svg viewBox="0 0 24 24" className="size-6" stroke="#333" strokeWidth={5} strokeLinecap="round">
            <path d="M12 3v18M3 12h18" />
          </svg>
        </button>
        <button type="button" aria-label="Zoom out" className={button}>
          <svg viewBox="0 0 24 24" className="size-6" stroke="#333" strokeWidth={6} strokeLinecap="round">
            <path d="M3 12h18" />
          </svg>
        </button>
        <button type="button" aria-label="Reset bearing to north" className={button}>
          <svg viewBox="0 0 16 34" className="h-[34px] w-4">
            <path d="M8 0l8 15H0Z" fill="#333" />
            <path d="M8 34l8-15H0Z" fill="#ccc" />
          </svg>
        </button>
      </div>
    </div>
  );
}

function LocationMap() {
  return (
    <div className="relative h-[600px] overflow-hidden rounded-2xl bg-[#ece8db]">
      <MapCanvas />
      <MapControls />
      <div className="absolute right-0.5 bottom-0.5 flex gap-3 bg-white/50 px-2.5 text-2xl leading-10 text-[#404040]">
        <span className="flex gap-2">
          <a href="#mapbox">© Mapbox</a>
          <a href="#osm">© OpenStreetMap</a>
        </span>
        <a href="#improve" className="font-bold">
          Improve this map
        </a>
      </div>
      <div className="pointer-events-none absolute inset-0 rounded-2xl border-2 border-[#e5e7eb]" />
    </div>
  );
}

/* ---------- Cards ---------- */

function Card({ title, children }: { title: string; children: ReactNode }) {
  return (
    <section className="rounded-3xl border-2 border-[#282828] bg-[#090909] p-8 shadow-[0_8px_48px_rgba(0,0,0,0.2)]">
      <h3 className="mb-8 text-[40px] leading-[56px] font-bold text-[#eeeeee]">{title}</h3>
      {children}
    </section>
  );
}

function Panel({ children }: { children: ReactNode }) {
  return <div className="rounded-3xl border-2 border-[#1d1d1d] bg-[#060606] p-8 shadow-[0_8px_32px_rgba(0,0,0,0.2)]">{children}</div>;
}

function Stats({ title, rows }: { title: string; rows: [string, string][] }) {
  return (
    <Panel>
      <h4 className="mb-3.5 text-[28px] leading-[42px] font-bold text-[#f5f5f5]">{title}</h4>
      <dl className="flex flex-col gap-6 text-[#eeeeee]">
        {rows.map(([label, value]) => (
          <div key={label} className="flex items-start justify-between">
            <dt className="text-[28px] leading-[42px]">{label}</dt>
            <dd className="text-[32px] leading-[48px]">{value}</dd>
          </div>
        ))}
      </dl>
    </Panel>
  );
}

const BANDS = [
  { label: "High", style: "h-[192px] bg-[#345d3f]" },
  { label: "Medium", style: "h-[192px] bg-[#66572f]" },
  { label: "Low", style: "h-[128px] bg-[#6c4430]" },
  { label: "Critical", style: "h-[128px] bg-[#6a3737]" },
];

function Gauge() {
  return (
    <Panel>
      <h4 className="mb-3.5 text-[28px] leading-[42px] text-[#eeeeee]">Fill Level (%)</h4>
      <div className="relative overflow-hidden rounded-lg">
        {BANDS.map(({ label, style }) => (
          <div key={label} className={"pt-[62px] pr-2 text-right text-2xl leading-9 text-[#eeeeee] " + style}>
            {label}
          </div>
        ))}
        <div className="absolute inset-x-0 top-0 h-1 bg-black" />
        <span className="absolute top-0 left-4 rounded-lg bg-black px-4 py-1.5 text-2xl leading-9 text-white">100%</span>
      </div>
    </Panel>
  );
}

export default function App() {
  return (
    <div className="flex h-screen overflow-hidden bg-[#111111] font-['Liberation_Sans',Arial,sans-serif]">
      <Sidebar />
      <div className="flex min-w-0 flex-1 flex-col">
        <div className="px-[38px]">
          <Header />
        </div>
        <main className="flex min-h-0 flex-1 flex-col gap-16 overflow-hidden px-16">
          <Hero />
          <div className="grid shrink-0 grid-cols-3 gap-16 rounded-3xl border-2 border-[#242424] bg-[#0e0e0e] p-12 shadow-[0_0_64px_rgba(0,0,0,0.25)]">
            <div className="col-span-2 flex flex-col gap-8">
              <Card title="Fill Level Trend">
                <Panel>
                  <FillChart />
                </Panel>
              </Card>
              <Card title="Location">
                <LocationMap />
              </Card>
            </div>
            <Card title="Current Status">
              <div className="flex flex-col gap-8">
                <Stats
                  title="Current Values"
                  rows={[
                    ["Measured Height (m):", "252.00m"],
                    ["Total Volume (hm³):", "20.16hm³"],
                    ["Useful Volume (hm³):", "19.16hm³"],
                  ]}
                />
                <Stats
                  title="Fill Statistics"
                  rows={[
                    ["Minimum Fill:", "11.12%"],
                    ["Average Fill:", "60.01%"],
                    ["Maximum Fill:", "104.87%"],
                  ]}
                />
                <Gauge />
              </div>
            </Card>
          </div>
        </main>
      </div>
    </div>
  );
}
